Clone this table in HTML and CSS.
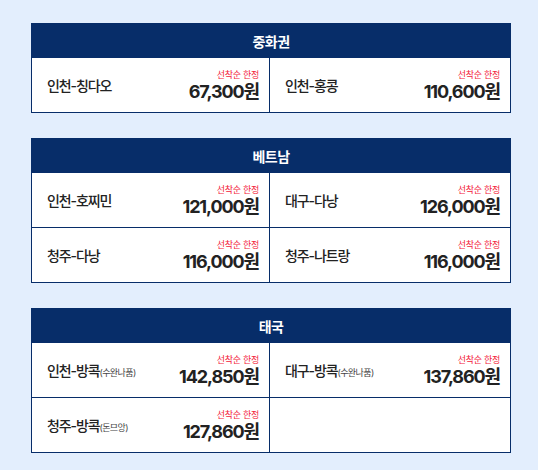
FILE: index.html
```html
<!DOCTYPE html>
<html lang="ko">
<head>
<meta charset="utf-8">
<link rel="stylesheet" href="styles.css">
</head>
<body>
<div class="page">
  <section class="region">
    <h2 class="region-title">중화권</h2>
    <div class="grid">
      <div class="cell"><span class="route">인천-칭다오</span><div class="price-box"><span class="limit">선착순 한정</span><span class="price">67,300원</span></div></div>
      <div class="cell"><span class="route">인천-홍콩</span><div class="price-box"><span class="limit">선착순 한정</span><span class="price">110,600원</span></div></div>
    </div>
  </section>
  <section class="region">
    <h2 class="region-title">베트남</h2>
    <div class="grid">
      <div class="cell"><span class="route">인천-호찌민</span><div class="price-box"><span class="limit">선착순 한정</span><span class="price">121,000원</span></div></div>
      <div class="cell"><span class="route">대구-다낭</span><div class="price-box"><span class="limit">선착순 한정</span><span class="price">126,000원</span></div></div>
      <div class="cell"><span class="route">청주-다낭</span><div class="price-box"><span class="limit">선착순 한정</span><span class="price">116,000원</span></div></div>
      <div class="cell"><span class="route">청주-나트랑</span><div class="price-box"><span class="limit">선착순 한정</span><span class="price">116,000원</span></div></div>
    </div>
  </section>
  <section class="region">
    <h2 class="region-title">태국</h2>
    <div class="grid">
      <div class="cell"><span class="route">인천-방콕<small>(수완나품)</small></span><div class="price-box"><span class="limit">선착순 한정</span><span class="price">142,850원</span></div></div>
      <div class="cell"><span class="route">대구-방콕<small>(수완나품)</small></span><div class="price-box"><span class="limit">선착순 한정</span><span class="price">137,860원</span></div></div>
      <div class="cell"><span class="route">청주-방콕<small>(돈므앙)</small></span><div class="price-box"><span class="limit">선착순 한정</span><span class="price">127,860원</span></div></div>
      <div class="cell empty"></div>
    </div>
  </section>
</div>
</body>
</html>
```
FILE: styles.css
```css
html, body {
  margin: 0;
  padding: 0;
  background: #e3eefd;
}
body {
  font-family: Inter, "Noto Sans CJK KR", sans-serif;
  color: #222;
}
.page {
  padding: 23px 27px 0 31px;
  display: flex;
  flex-direction: column;
  gap: 25px;
}
.region {
  border: 1px solid #072d69;
  background: #fff;
}
.region-title {
  margin: -1px -1px 0;
  height: 35px;
  background: #072d69;
  color: #fff;
  font-size: 14px;
  font-weight: 700;
  display: flex;
  align-items: center;
  justify-content: center;
  letter-spacing: -0.6px;
}
.grid {
  display: grid;
  grid-template-columns: 238px 1fr;
}
.cell {
  height: 54px;
  display: flex;
  align-items: center;
  justify-content: space-between;
  padding: 0 10px 0 15px;
  box-sizing: border-box;
}
.cell:nth-child(odd) {
  border-right: 1px solid #072d69;
}
.cell:nth-child(n+3) {
  border-top: 1px solid #072d69;
  height: 55px;
}
.route {
  font-size: 14px;
  font-weight: 500;
  color: #222;
  letter-spacing: -1.1px;
}
.route small {
  font-size: 9px;
  color: #444;
  font-weight: 400;
  letter-spacing: -0.6px;
}
.price-box {
  display: flex;
  flex-direction: column;
  align-items: flex-end;
  padding-top: 2px;
}
.limit {
  font-size: 9px;
  color: #f3223a;
  line-height: 12px;
  letter-spacing: -0.3px;
}
.price {
  font-size: 18px;
  font-weight: 700;
  color: #222;
  line-height: 22px;
  letter-spacing: -1.1px;
}
```
